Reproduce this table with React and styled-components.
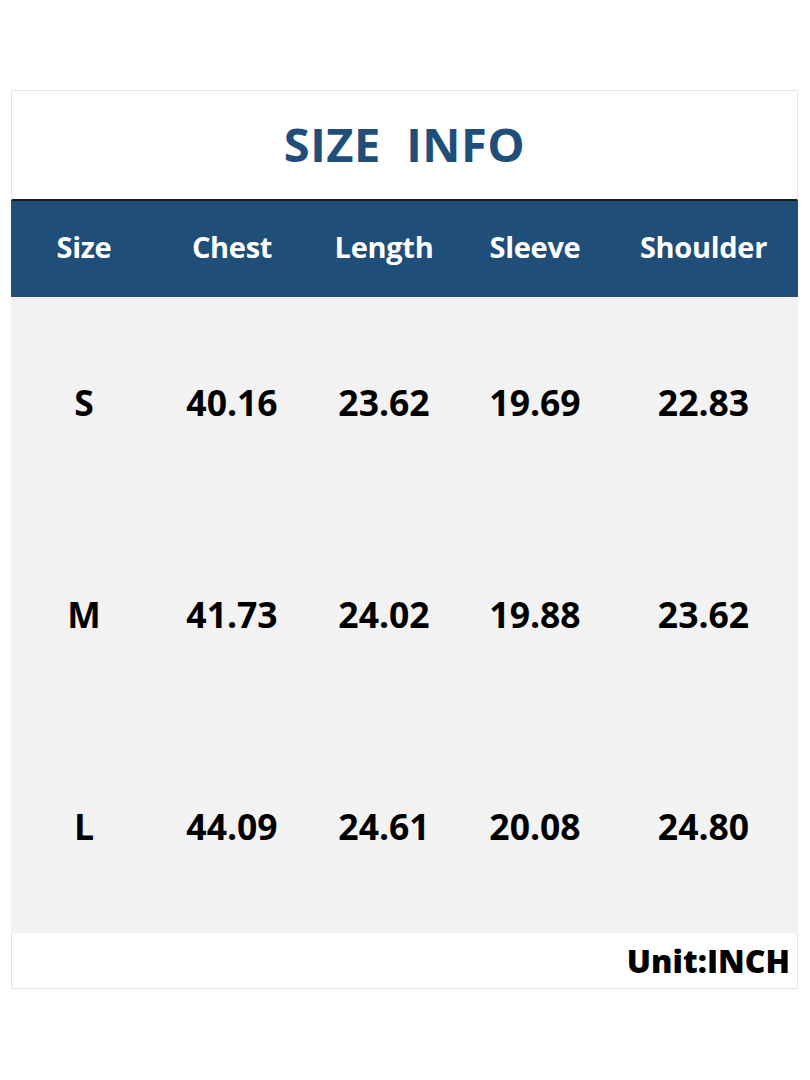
import styled, { createGlobalStyle } from 'styled-components';

const GlobalStyle = createGlobalStyle`
  html, body {
    margin: 0;
    padding: 0;
    background: #ffffff;
  }
  body {
    font-family: "Open Sans", "Noto Sans", sans-serif;
  }
`;

const Page = styled.div`
  width: 810px;
  height: 1080px;
  padding: 90px 12px 0 11px;
  box-sizing: border-box;
`;

const Table = styled.div`
  width: 787px;
  display: flex;
  flex-direction: column;
`;

const TitleBar = styled.div`
  height: 111px;
  box-sizing: border-box;
  border: 1px solid #e3e3e3;
  border-bottom: 2px solid #1a1a1a;
  display: flex;
  align-items: center;
  justify-content: center;
  padding-bottom: 3px;
`;

const Title = styled.h1`
  margin: 0;
  color: #1f4e79;
  font-size: 47px;
  font-weight: 700;
  white-space: pre;
  letter-spacing: 0.5px;
`;

const Row = styled.div`
  display: grid;
  grid-template-columns: 146px 150px 154px 148px 189px;
  height: ${p => p.$height}px;
  box-sizing: border-box;
  padding-bottom: ${p => p.$shift || 0}px;
  background: ${p => p.$bg};
  align-items: center;
  justify-items: center;
`;

const HeadCell = styled.div`
  color: #ffffff;
  font-size: 29px;
  font-weight: 700;
  letter-spacing: -0.3px;
`;

const Cell = styled.div`
  color: #000000;
  font-size: 35.5px;
  font-weight: 700;
  letter-spacing: 0px;
`;

const Footer = styled.div`
  height: 56px;
  box-sizing: border-box;
  border: 1px solid #e3e3e3;
  border-top: none;
  display: flex;
  align-items: center;
  justify-content: flex-end;
  padding-right: 7px;
`;

const Unit = styled.span`
  color: #000000;
  font-size: 32px;
  font-weight: 800;
  letter-spacing: 0px;
`;

const headers = ['Size', 'Chest', 'Length', 'Sleeve', 'Shoulder'];

const rows = [
  ['S', '40.16', '23.62', '19.69', '22.83'],
  ['M', '41.73', '24.02', '19.88', '23.62'],
  ['L', '44.09', '24.61', '20.08', '24.80'],
];

export default function App() {
  return (
    <>
      <GlobalStyle />
      <Page>
        <Table>
          <TitleBar>
            <Title>{'SIZE  INFO'}</Title>
          </TitleBar>
          <Row $height={96} $shift={5} $bg="#1f4e79">
            {headers.map(h => (
              <HeadCell key={h}>{h}</HeadCell>
            ))}
          </Row>
          {rows.map(r => (
            <Row key={r[0]} $height={212} $shift={2} $bg="#f2f2f2">
              {r.map((v, i) => (
                <Cell key={i}>{v}</Cell>
              ))}
            </Row>
          ))}
          <Footer>
            <Unit>Unit:INCH</Unit>
          </Footer>
        </Table>
      </Page>
    </>
  );
}
